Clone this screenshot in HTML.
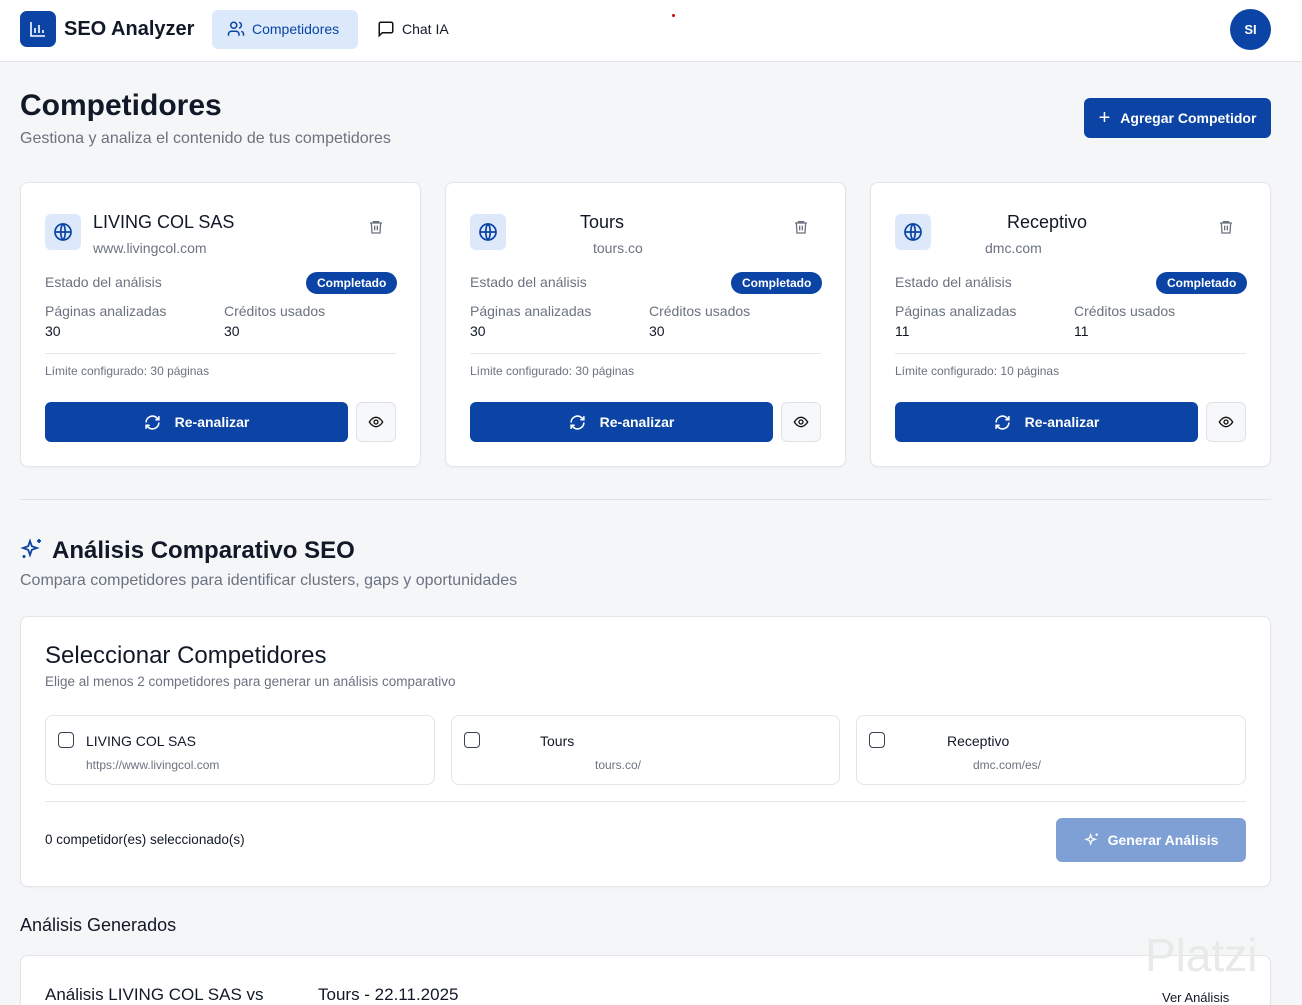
<!DOCTYPE html>
<html><head><meta charset="utf-8"><style>
*{box-sizing:border-box;margin:0;padding:0}
html{overflow:hidden;width:1302px;height:1005px}
body{width:1302px;height:1005px;overflow:hidden;background:#f5f6f8;font-family:"Liberation Sans",sans-serif;color:#111827;position:relative}
.a{position:absolute;white-space:nowrap}
.hdr{position:absolute;left:0;top:0;width:1302px;height:62px;background:#fff;border-bottom:1px solid #e2e6ec}
.card{position:absolute;background:#fff;border:1px solid #e2e5ea;border-radius:8px;box-shadow:0 1px 2px rgba(0,0,0,.04)}
.g{color:#6b7280}
.btn{position:absolute;background:#0b44a4;color:#fff;border-radius:6px;font-weight:bold;font-size:14px;display:flex;align-items:center;justify-content:center;gap:14px}
.eye{position:absolute;border:1px solid #dfe3e8;background:#f7f8fa;border-radius:6px;display:flex;align-items:center;justify-content:center}
.badge{position:absolute;background:#0b44a4;color:#fff;font-size:12px;font-weight:bold;border-radius:11px;height:22px;line-height:22px;padding:0 11px}
.opt{position:absolute;top:715px;height:70px;background:#fff;border:1px solid #e2e5ea;border-radius:8px}
.cb{position:absolute;width:16px;height:16px;border:1.5px solid #374151;border-radius:4px}
</style></head><body>
<div class="hdr"></div>
<div class="a" style="left:20px;top:11px;width:36px;height:36px;background:#0b44a4;border-radius:7px">
<svg width="36" height="36" viewBox="0 0 36 36" fill="none" stroke="#fff" stroke-width="1.6"><path d="M11 11v14h14M15 22v-5M19 22v-8M23 22v-3"/></svg></div>
<div class="a" style="left:64px;top:18px;font-size:20px;font-weight:bold">SEO Analyzer</div>
<div class="a" style="left:212px;top:10px;width:146px;height:39px;background:#dbe9fb;border-radius:6px"></div>
<svg class="a" style="left:227px;top:20px" width="18" height="18" viewBox="0 0 24 24" fill="none" stroke="#0b44a4" stroke-width="2"><circle cx="9" cy="7" r="4"/><path d="M2 21v-2a4 4 0 0 1 4-4h6a4 4 0 0 1 4 4v2M16 3.1a4 4 0 0 1 0 7.8M22 21v-2a4 4 0 0 0-3-3.9"/></svg>
<div class="a" style="left:252px;top:21px;font-size:14px;color:#0b44a4">Competidores</div>
<svg class="a" style="left:377px;top:20px" width="18" height="18" viewBox="0 0 24 24" fill="none" stroke="#111" stroke-width="2"><path d="M21 15a2 2 0 0 1-2 2H7l-4 4V5a2 2 0 0 1 2-2h14a2 2 0 0 1 2 2z"/></svg>
<div class="a" style="left:402px;top:21px;font-size:14px">Chat IA</div>
<div class="a" style="left:672px;top:14px;width:3px;height:3px;background:#c00;border-radius:50%"></div>
<div class="a" style="left:1230px;top:9px;width:41px;height:41px;background:#0b44a4;border-radius:50%;color:#fff;font-size:13px;font-weight:bold;text-align:center;line-height:41px">SI</div>

<div class="a" style="left:20px;top:89px;font-size:30px;font-weight:bold">Competidores</div>
<div class="a g" style="left:20px;top:130px;font-size:16px">Gestiona y analiza el contenido de tus competidores</div>
<div class="btn" style="left:1084px;top:98px;width:187px;height:40px;gap:10px"><span style="font-size:20px;font-weight:normal">+</span>Agregar Competidor</div>

<div id="cards"></div>
<script>
const data=[["LIVING COL SAS","www.livingcol.com",73,73,"30","30","30"],["Tours","tours.co",135,148,"30","30","30"],["Receptivo","dmc.com",137,115,"11","11","10"]];
let h="";
data.forEach((d,i)=>{const x=20+i*425;
h+=`<div class="card" style="left:${x}px;top:182px;width:401px;height:285px"></div>
<div class="a" style="left:${x+25}px;top:214px;width:36px;height:36px;background:#dde9fa;border-radius:6px"><svg width="36" height="36" viewBox="0 0 36 36" fill="none" stroke="#0b44a4" stroke-width="1.7"><circle cx="18" cy="18" r="8"/><path d="M10 18h16M18 10c3 3 3 13 0 16M18 10c-3 3-3 13 0 16"/></svg></div>
<div class="a" style="left:${x+d[2]}px;top:212px;font-size:18px">${d[0]}</div>
<div class="a g" style="left:${x+d[3]}px;top:240px;font-size:14px">${d[1]}</div>
<svg class="a" style="left:${x+348}px;top:219px" width="16" height="16" viewBox="0 0 24 24" fill="none" stroke="#6b7280" stroke-width="2"><path d="M3 6h18M8 6V4h8v2M5 6l1 15h12l1-15M10 10v7M14 10v7"/></svg>
<div class="a g" style="left:${x+25}px;top:274px;font-size:14px">Estado del análisis</div>
<div class="badge" style="left:${x+286}px;top:272px">Completado</div>
<div class="a g" style="left:${x+25}px;top:303px;font-size:14px">Páginas analizadas</div>
<div class="a g" style="left:${x+204}px;top:303px;font-size:14px">Créditos usados</div>
<div class="a" style="left:${x+25}px;top:323px;font-size:14px">${d[4]}</div>
<div class="a" style="left:${x+204}px;top:323px;font-size:14px">${d[5]}</div>
<div class="a" style="left:${x+25}px;top:353px;width:351px;height:1px;background:#e5e7eb"></div>
<div class="a g" style="left:${x+25}px;top:364px;font-size:12px">Límite configurado: ${d[6]} páginas</div>
<div class="btn" style="left:${x+25}px;top:402px;width:303px;height:40px"><svg width="17" height="17" viewBox="0 0 24 24" fill="none" stroke="#fff" stroke-width="2.2"><path d="M3 12a9 9 0 0 1 15-6.7L21 8M21 3v5h-5M21 12a9 9 0 0 1-15 6.7L3 16M3 21v-5h5"/></svg>Re-analizar</div>
<div class="eye" style="left:${x+336}px;top:402px;width:40px;height:40px"><svg width="16" height="16" viewBox="0 0 24 24" fill="none" stroke="#111" stroke-width="2"><path d="M2 12s4-7 10-7 10 7 10 7-4 7-10 7S2 12 2 12z"/><circle cx="12" cy="12" r="3"/></svg></div>`;});
document.getElementById("cards").outerHTML=h;
</script>

<div class="a" style="left:20px;top:499px;width:1251px;height:1px;background:#dfe3e8"></div>
<svg class="a" style="left:20px;top:537px" width="24" height="24" viewBox="0 0 24 24" fill="none" stroke="#0b44a4" stroke-width="1.8"><path d="M10 4l1.8 5.2L17 11l-5.2 1.8L10 18l-1.8-5.2L3 11l5.2-1.8z"/><path d="M19 2v4M17 4h4M4 18v3M2.5 19.5h3"/></svg>
<div class="a" style="left:52px;top:537px;font-size:24px;font-weight:bold">Análisis Comparativo SEO</div>
<div class="a g" style="left:20px;top:572px;font-size:16px">Compara competidores para identificar clusters, gaps y oportunidades</div>

<div class="card" style="left:20px;top:616px;width:1251px;height:271px"></div>
<div class="a" style="left:45px;top:642px;font-size:24px">Seleccionar Competidores</div>
<div class="a g" style="left:45px;top:674px;font-size:13.5px">Elige al menos 2 competidores para generar un análisis comparativo</div>
<div class="opt" style="left:45px;width:390px"></div>
<div class="cb" style="left:58px;top:732px"></div>
<div class="a" style="left:86px;top:733px;font-size:14px">LIVING COL SAS</div>
<div class="a g" style="left:86px;top:758px;font-size:12px">https://www.livingcol.com</div>
<div class="opt" style="left:451px;width:389px"></div>
<div class="cb" style="left:464px;top:732px"></div>
<div class="a" style="left:540px;top:733px;font-size:14px">Tours</div>
<div class="a g" style="left:595px;top:758px;font-size:12px">tours.co/</div>
<div class="opt" style="left:856px;width:390px"></div>
<div class="cb" style="left:869px;top:732px"></div>
<div class="a" style="left:947px;top:733px;font-size:14px">Receptivo</div>
<div class="a g" style="left:973px;top:758px;font-size:12px">dmc.com/es/</div>
<div class="a" style="left:45px;top:801px;width:1201px;height:1px;background:#e5e7eb"></div>
<div class="a" style="left:45px;top:832px;font-size:13.5px">0 competidor(es) seleccionado(s)</div>
<div class="btn" style="left:1056px;top:818px;width:190px;height:44px;background:#7fa0d4;gap:8px"><svg width="16" height="16" viewBox="0 0 24 24" fill="none" stroke="#fff" stroke-width="1.8"><path d="M10 4l1.8 5.2L17 11l-5.2 1.8L10 18l-1.8-5.2L3 11l5.2-1.8z"/><path d="M19 2v4M17 4h4"/></svg>Generar Análisis</div>

<div class="a" style="left:20px;top:915px;font-size:18px">Análisis Generados</div>
<div class="card" style="left:20px;top:955px;width:1251px;height:60px;border-bottom:none;border-radius:8px 8px 0 0"></div>
<div class="a" style="left:45px;top:985px;font-size:17px">Análisis LIVING COL SAS vs</div>
<div class="a" style="left:318px;top:985px;font-size:17px">Tours - 22.11.2025</div>
<div class="a" style="left:1162px;top:990px;font-size:13px">Ver Análisis</div>
<div class="a" style="left:1145px;top:928px;font-size:46px;color:#e8eae8">Platzi</div>
</body></html>
